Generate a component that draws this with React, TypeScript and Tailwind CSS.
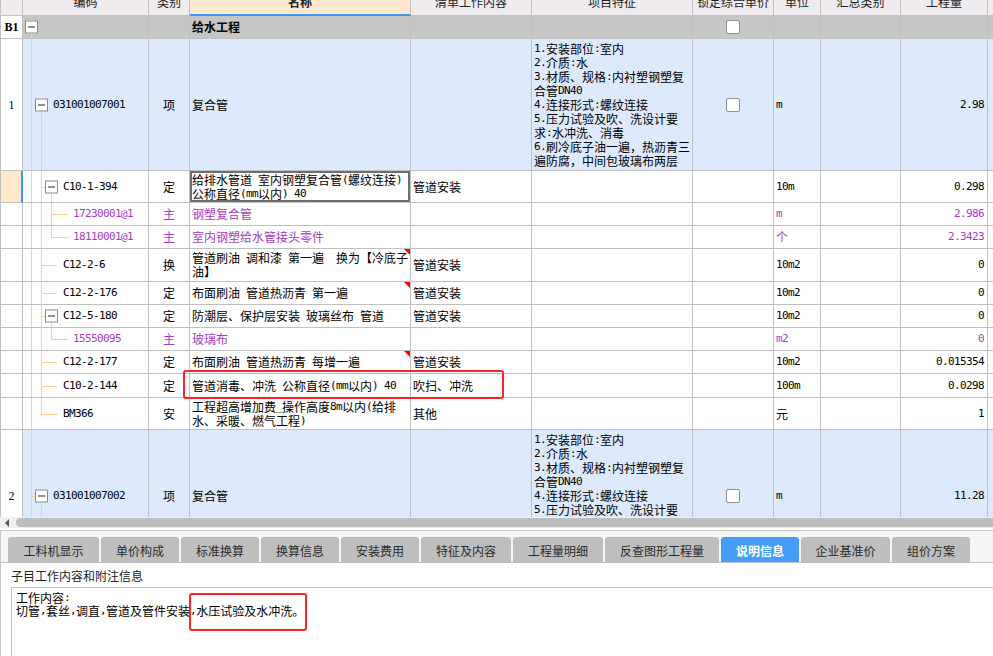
import React from "react";

// column widths (include right border)
const W = [
  "w-[23px]",
  "w-[126px]",
  "w-[41px]",
  "w-[221px]",
  "w-[121px]",
  "w-[161px]",
  "w-[81px]",
  "w-[47px]",
  "w-[80px]",
  "w-[87px]",
  "w-[5px]",
];

const MONO = "font-['DejaVu_Sans_Mono',monospace] text-[11px] tracking-[-0.62px] whitespace-pre";

// ascii runs get a half-width mono face, the rest stays CJK
function Txt({ s }: { s: string }) {
  const parts = s.split(/([\x20-\x7e]+)/);
  return (
    <>
      {parts.map((p, i) =>
        p === "" ? null : /^[\x20-\x7e]+$/.test(p) ? (
          <span key={i} className={MONO}>
            {p}
          </span>
        ) : (
          <span key={i} className="whitespace-pre">
            {p}
          </span>
        )
      )}
    </>
  );
}

// one fixed-height text line, so mixed fonts don't stretch it
function Line({ s }: { s: string }) {
  return (
    <div className="h-[14px] flex items-center leading-[14px]">
      <Txt s={s} />
    </div>
  );
}

type Tree = {
  v: string[];
  h?: string;
  box?: string;
  pad: string;
};

type Row = {
  h: string;
  no?: string;
  noBold?: boolean;
  bg: string;
  code?: string;
  tree: Tree;
  kind?: string;
  name: string[];
  bold?: boolean;
  work?: string;
  feat?: string[];
  check?: boolean;
  unit?: string;
  qty?: string;
  purple?: boolean;
  flag?: boolean;
  sel?: boolean;
};

const A = "left-[8px] top-0 bottom-0";
const Bf = "left-[18px] top-0 bottom-0";
const Bb = "left-[18px] top-1/2 bottom-0";
const Bt = "left-[18px] top-0 bottom-1/2";
const Cf = "left-[28px] top-0 bottom-0";
const Cb = "left-[28px] top-1/2 bottom-0";
const Ct = "left-[28px] top-0 bottom-1/2";

const H1 = "left-[8px] w-[4px]";
const H2box = "left-[18px] w-[4px]";
const H2 = "left-[18px] w-[16px]";
const H3 = "left-[28px] w-[17px]";

const feat = [
  "1.安装部位:室内",
  "2.介质:水",
  "3.材质、规格:内衬塑钢塑复",
  "合管DN40",
  "4.连接形式:螺纹连接",
  "5.压力试验及吹、洗设计要",
  "求:水冲洗、消毒",
  "6.刷冷底子油一遍，热沥青三",
  "遍防腐，中间包玻璃布两层",
];

const BLUE = "bg-[#dde9fc]";
const WHITE = "bg-white";

const rows: Row[] = [
  {
    h: "h-[23px]",
    no: "B1",
    noBold: true,
    bg: "bg-[#c6c6c6]",
    tree: { v: ["left-[8px] top-1/2 bottom-0"], box: "left-[2px]", pad: "pl-[30px]" },
    name: ["给水工程"],
    bold: true,
    check: true,
  },
  {
    h: "h-[132px]",
    no: "1",
    bg: BLUE,
    code: "031001007001",
    tree: { v: [A, Bb], h: H1, box: "left-[12px]", pad: "pl-[30px]" },
    kind: "项",
    name: ["复合管"],
    feat,
    check: true,
    unit: "m",
    qty: "2.98",
  },
  {
    h: "h-[32px]",
    bg: WHITE,
    sel: true,
    code: "C10-1-394",
    tree: { v: [A, Bf, Cb], h: H2box, box: "left-[22px]", pad: "pl-[40px]" },
    kind: "定",
    name: ["给排水管道 室内钢塑复合管(螺纹连接)", "公称直径(mm以内) 40"],
    work: "管道安装",
    unit: "10m",
    qty: "0.298",
  },
  {
    h: "h-[23px]",
    bg: WHITE,
    purple: true,
    code: "17230001@1",
    tree: { v: [A, Bf, Cf], h: H3, pad: "pl-[50px]" },
    kind: "主",
    name: ["钢塑复合管"],
    unit: "m",
    qty: "2.986",
  },
  {
    h: "h-[23px]",
    bg: WHITE,
    purple: true,
    code: "18110001@1",
    tree: { v: [A, Bf, Ct], h: H3, pad: "pl-[50px]" },
    kind: "主",
    name: ["室内钢塑给水管接头零件"],
    unit: "个",
    qty: "2.3423",
  },
  {
    h: "h-[33px]",
    bg: WHITE,
    flag: true,
    code: "C12-2-6",
    tree: { v: [A, Bf], h: H2, pad: "pl-[40px]" },
    kind: "换",
    name: ["管道刷油 调和漆 第一遍  换为【冷底子", "油】"],
    work: "管道安装",
    unit: "10m2",
    qty: "0",
  },
  {
    h: "h-[23px]",
    bg: WHITE,
    flag: true,
    code: "C12-2-176",
    tree: { v: [A, Bf], h: H2, pad: "pl-[40px]" },
    kind: "定",
    name: ["布面刷油 管道热沥青 第一遍"],
    work: "管道安装",
    unit: "10m2",
    qty: "0",
  },
  {
    h: "h-[23px]",
    bg: WHITE,
    code: "C12-5-180",
    tree: { v: [A, Bf, Cb], h: H2box, box: "left-[22px]", pad: "pl-[40px]" },
    kind: "定",
    name: ["防潮层、保护层安装 玻璃丝布 管道"],
    work: "管道安装",
    unit: "10m2",
    qty: "0",
  },
  {
    h: "h-[23px]",
    bg: WHITE,
    purple: true,
    code: "15550095",
    tree: { v: [A, Bf, Ct], h: H3, pad: "pl-[50px]" },
    kind: "主",
    name: ["玻璃布"],
    unit: "m2",
    qty: "0",
  },
  {
    h: "h-[23px]",
    bg: WHITE,
    flag: true,
    code: "C12-2-177",
    tree: { v: [A, Bf], h: H2, pad: "pl-[40px]" },
    kind: "定",
    name: ["布面刷油 管道热沥青 每增一遍"],
    work: "管道安装",
    unit: "10m2",
    qty: "0.015354",
  },
  {
    h: "h-[24px]",
    bg: WHITE,
    code: "C10-2-144",
    tree: { v: [A, Bf], h: H2, pad: "pl-[40px]" },
    kind: "定",
    name: ["管道消毒、冲洗 公称直径(mm以内) 40"],
    work: "吹扫、冲洗",
    unit: "100m",
    qty: "0.0298",
  },
  {
    h: "h-[32px]",
    bg: WHITE,
    code: "BM366",
    tree: { v: [A, Bt], h: H2, pad: "pl-[40px]" },
    kind: "安",
    name: ["工程超高增加费_操作高度8m以内(给排", "水、采暖、燃气工程)"],
    work: "其他",
    unit: "元",
    qty: "1",
  },
  {
    h: "h-[132px]",
    no: "2",
    bg: BLUE,
    code: "031001007002",
    tree: { v: [A, Bb], h: H1, box: "left-[12px]", pad: "pl-[30px]" },
    kind: "项",
    name: ["复合管"],
    feat,
    check: true,
    unit: "m",
    qty: "11.28",
  },
];

const heads = ["", "编码", "类别", "名称", "清单工作内容", "项目特征", "锁定综合单价", "单位", "汇总类别", "工程量", ""];

function Header() {
  return (
    <div className="flex h-[16px] bg-[#efebef] text-[#222]">
      {heads.map((t, i) => (
        <div
          key={i}
          className={`${W[i]} shrink-0 h-full flex justify-center overflow-hidden ${
            i === 0 ? "border-l border-r border-b border-[#c0c0c0]" : ""
          } ${i === 3 ? "bg-[#ffe8cc] border-r border-[#c0c0c0] border-b-2 border-b-[#3d96f2] font-bold" : ""} ${
            i !== 0 && i !== 3 && i !== 10 ? "border-r border-b border-[#c0c0c0]" : ""
          } ${i === 10 ? "border-b border-[#c0c0c0]" : ""}`}
        >
          <span className="leading-[12px] mt-[-4px] whitespace-nowrap">{t}</span>
        </div>
      ))}
    </div>
  );
}

function Box({ pos }: { pos: string }) {
  return (
    <span
      className={`absolute ${pos} top-1/2 -translate-y-1/2 w-[13px] h-[13px] bg-white border border-[#8a8a8a] flex items-center justify-center z-10`}
    >
      <span className="w-[7px] h-px bg-[#222]" />
    </span>
  );
}

function Check() {
  return <span className="w-[14px] h-[14px] bg-white border border-[#8f8f8f] rounded-[2px]" />;
}

function GridRow({ r }: { r: Row }) {
  const col = r.purple ? "text-[#a63cc2]" : "text-black";
  const base = "shrink-0 border-r border-b border-[#c0c0c0] flex items-center";
  return (
    <div className={`flex ${r.h} ${r.bg} ${col}`}>
      <div
        className={`${W[0]} shrink-0 border-l border-b border-[#c0c0c0] flex items-center justify-center font-['Liberation_Serif',serif] text-black ${
          r.sel ? "bg-[#ffe8cc] border-r-2 border-r-[#3d96f2]" : "bg-white border-r"
        } ${r.noBold ? "font-bold" : ""}`}
      >
        {r.no}
      </div>
      <div className={`${W[1]} ${base} relative ${r.tree.pad}`}>
        {r.tree.v.map((v, i) => (
          <span key={i} className={`absolute ${v} w-px bg-[#ffcf8f]`} />
        ))}
        {r.tree.h && <span className={`absolute ${r.tree.h} top-1/2 h-px bg-[#ffcf8f]`} />}
        {r.tree.box && <Box pos={r.tree.box} />}
        {r.code && <Line s={r.code} />}
      </div>
      <div className={`${W[2]} ${base} justify-center`}>{r.kind}</div>
      <div
        className={`${W[3]} ${base} relative pl-[2px] ${r.bold ? "font-bold" : ""} ${
          r.sel ? "shadow-[inset_0_0_0_2px_#6e6e6e]" : ""
        }`}
      >
        <div>
          {r.name.map((l, i) => (
            <Line key={i} s={l} />
          ))}
        </div>
        {r.flag && (
          <span className="absolute top-0 right-0 w-0 h-0 border-t-[6px] border-t-[#ff0000] border-l-[6px] border-l-transparent" />
        )}
      </div>
      <div className={`${W[4]} ${base} pl-[2px]`}>{r.work}</div>
      <div className={`${W[5]} ${base} pl-[2px]`}>
        {r.feat && (
          <div>
            {r.feat.map((l, i) => (
              <Line key={i} s={l} />
            ))}
          </div>
        )}
      </div>
      <div className={`${W[6]} ${base} justify-center`}>{r.check && <Check />}</div>
      <div className={`${W[7]} ${base} pl-[2px]`}>{r.unit && <Line s={r.unit} />}</div>
      <div className={`${W[8]} ${base}`} />
      <div className={`${W[9]} ${base} justify-end pr-[3px]`}>{r.qty && <Line s={r.qty} />}</div>
      <div className={`${W[10]} shrink-0 border-b border-[#c0c0c0]`} />
    </div>
  );
}

const tabs: [string, string][] = [
  ["工料机显示", "w-[91px]"],
  ["单价构成", "w-[78px]"],
  ["标准换算", "w-[78px]"],
  ["换算信息", "w-[78px]"],
  ["安装费用", "w-[78px]"],
  ["特征及内容", "w-[90px]"],
  ["工程量明细", "w-[90px]"],
  ["反查图形工程量", "w-[114px]"],
  ["说明信息", "w-[78px]"],
  ["企业基准价", "w-[89px]"],
  ["组价方案", "w-[78px]"],
];

export default function App() {
  return (
    <div className="relative w-[993px] h-[656px] overflow-hidden bg-white font-['Noto_Sans_CJK_SC',sans-serif] text-[12px] text-black flex flex-col">
      <div className="h-[517px] shrink-0 overflow-hidden">
        <Header />
        {rows.map((r, i) => (
          <GridRow key={i} r={r} />
        ))}
      </div>

      {/* horizontal scrollbar */}
      <div className="h-[11px] shrink-0 bg-[#f0f0f0] flex items-center">
        <div className="w-[16px] h-full flex items-center pl-[5px]">
          <span className="w-0 h-0 border-y-[4px] border-y-transparent border-r-[4px] border-r-[#555]" />
        </div>
        <div className="flex-1 h-[9px] bg-[#bdbdbd] rounded-l-[5px]" />
      </div>

      <div className="mt-[2px] flex-1 border-t border-l border-[#c8c8c8] flex flex-col">
        <div className="h-[32px] shrink-0 bg-[#f5f5f5] border-b border-[#c0c0c0] flex items-end gap-[2px] pl-[7px]">
          {tabs.map(([t, w]) => (
            <div
              key={t}
              className={`${w} h-[25px] rounded-t-[3px] flex items-center justify-center text-[12px] leading-[14px] pt-[2px] ${
                t === "说明信息" ? "bg-[#459dfa] text-white font-bold" : "bg-[#bebebe] text-[#2b2b2b]"
              }`}
            >
              {t}
            </div>
          ))}
        </div>
        <div className="pl-[10px] pt-[6px] leading-[14px] text-[#222]">子目工作内容和附注信息</div>
        <div className="ml-[10px] mt-[4px] flex-1 border-t border-l border-[#c0c0c0] pl-[4px] pt-[3px] leading-[13px]">
          <div className="h-[13px] flex items-center">
            <Txt s="工作内容:" />
          </div>
          <div className="h-[13px] flex items-center">
            <Txt s="切管,套丝,调直,管道及管件安装,水压试验及水冲洗。" />
          </div>
        </div>
      </div>

      {/* red annotation frames */}
      <div className="absolute left-[183px] top-[370px] w-[321px] h-[29px] border-2 border-[#ff2424] rounded-[3px]" />
      <div className="absolute left-[189px] top-[593px] w-[118px] h-[38px] border-2 border-[#ff2424] rounded-[3px]" />
    </div>
  );
}
